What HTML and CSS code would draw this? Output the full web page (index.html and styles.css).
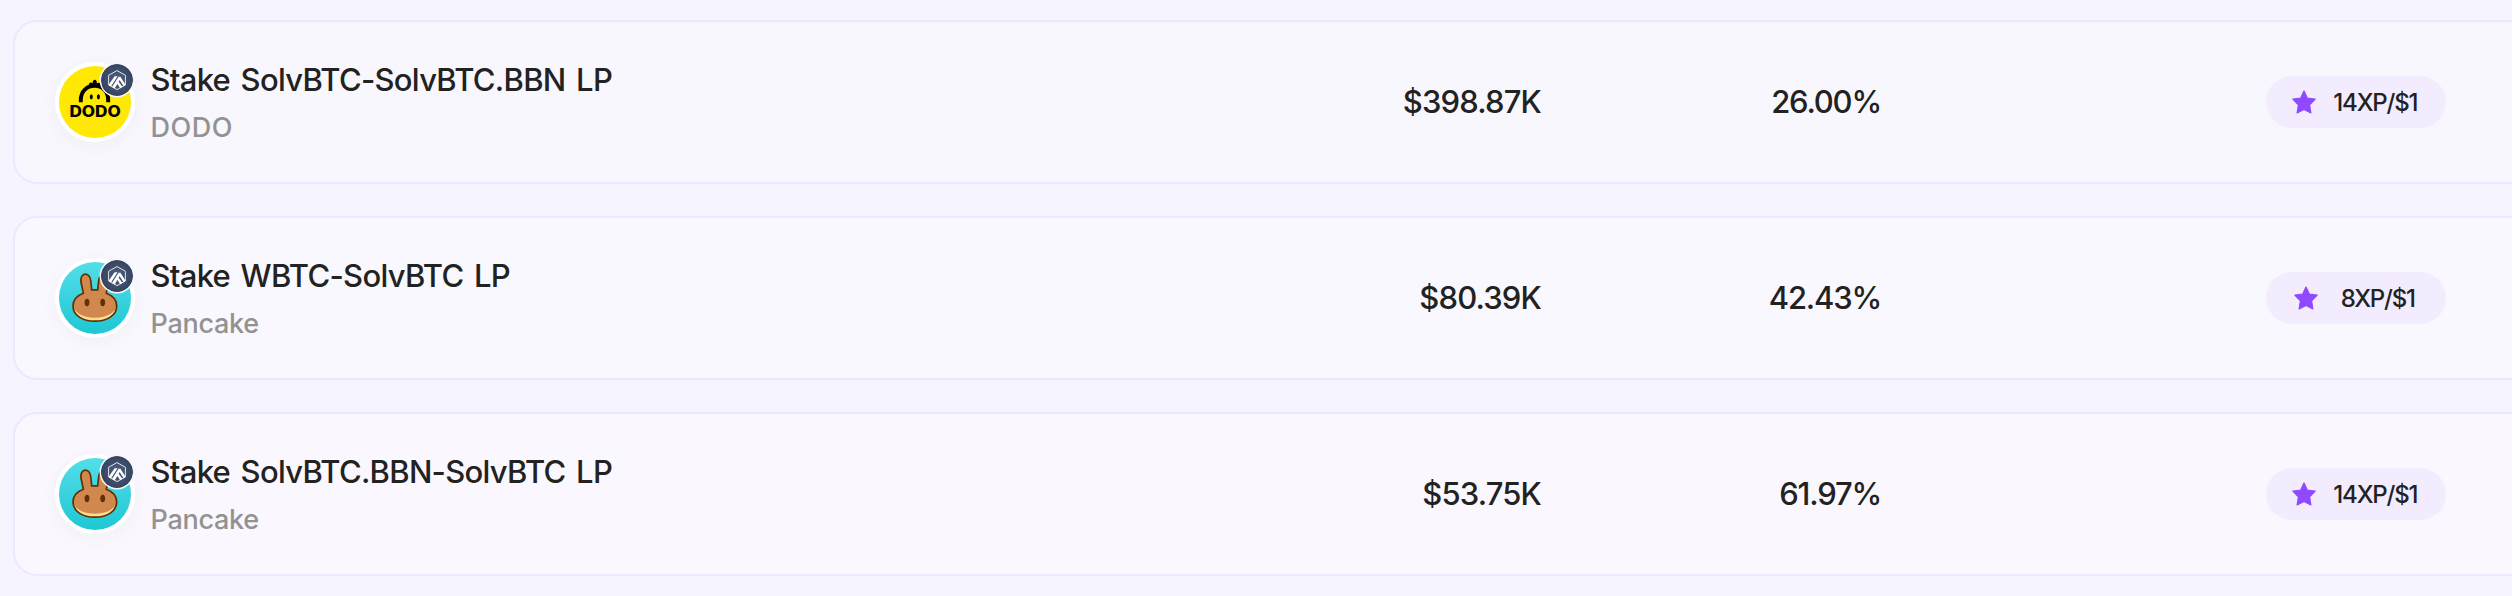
FILE: index.html
```html
<!DOCTYPE html>
<html lang="en">
<head>
    <meta charset="UTF-8">
    <meta name="viewport" content="width=device-width, initial-scale=1.0">
    <title>Stake</title>
    <link rel="stylesheet" href="styles.css">
</head>
<body>

<!-- shared icons -->
<svg class="defs" width="0" height="0">
    <defs>
        <radialGradient id="navy">
            <stop offset="0" stop-color="#50617f"/>
            <stop offset="1" stop-color="#35435f"/>
        </radialGradient>
        <linearGradient id="aqua" x1="0" y1="0" x2="0" y2="1">
            <stop offset="0" stop-color="#53dee9"/>
            <stop offset="1" stop-color="#1fc7d4"/>
        </linearGradient>
    </defs>
    <symbol id="arbitrum" viewBox="0 0 32 32">
        <circle cx="16" cy="16" r="16" fill="url(#navy)"/>
        <path d="M16 6.6 24.4 11.3V20.9L16 25.6 7.6 20.9V11.3Z" fill="none" stroke="#dfe5ee" stroke-width="1"/>
        <path d="M8 20.2 13.6 12.2H16.5L10 22.4 8 21.3ZM11 23 18 12.2 19.5 14.6 13.7 24.5ZM19.2 12.6 24.2 20.2V21.3L22.6 22.3 17.9 14.8ZM17.2 17.2 21.5 23 19.2 24.3 16 19.2Z" fill="#fff"/>
    </symbol>
    <symbol id="pancake" viewBox="0 0 72 72">
        <rect width="72" height="72" fill="url(#aqua)"/>
        <path d="M24.3 31.2 22 20C20.8 9.5 31 10 31.7 18.5L32.7 27.9H38.7L39.7 18.5C40.5 10 50.5 9.5 49.5 20L47.3 31.2C54 33.7 57.7 38 57.7 44 57.7 53.5 48 59.2 35.8 59.2S14 53.5 14 44C14 38 17.7 33.7 24.3 31.2Z" fill="#fedc90"/>
        <path d="M24.3 31.2 22 20C20.8 9.5 31 10 31.7 18.5L32.7 27.9H38.7L39.7 18.5C40.5 10 50.5 9.5 49.5 20L47.3 31.2C54 33.7 57.7 37 57.7 42 57.7 50.5 48 55.7 35.8 55.7S14 50.5 14 42C14 37 17.7 33.7 24.3 31.2Z" fill="#d1884f"/>
        <path d="M24.3 31.2 22 20C20.8 9.5 31 10 31.7 18.5L32.7 27.9H38.7L39.7 18.5C40.5 10 50.5 9.5 49.5 20L47.3 31.2C54 33.7 57.7 38 57.7 44 57.7 53.5 48 59.2 35.8 59.2S14 53.5 14 44C14 38 17.7 33.7 24.3 31.2Z" fill="none" stroke="#633001" stroke-width="1.7"/>
        <ellipse cx="28" cy="40.5" rx="2.4" ry="3.7" fill="#633001"/>
        <ellipse cx="43.7" cy="40.5" rx="2.4" ry="3.7" fill="#633001"/>
    </symbol>
    <symbol id="star" viewBox="0 0 24 24">
        <path d="M12 1 15.3 8 23.2 9.2 17.6 14.9 18.9 23 12 19.5 5.1 23 6.4 14.9.8 9.2 8.7 8Z" fill="#8f4aff" stroke="#8f4aff" stroke-width="1.2" stroke-linejoin="round"/>
    </symbol>
</svg>

<div class="list">
    <div class="row">
        <div class="pool">
            <div class="avatar">
                <svg class="logo" viewBox="0 0 72 72">
                    <rect width="72" height="72" fill="#ffe804"/>
                    <path d="M21.8 36.2V34C21.8 25 28 19.8 35.6 19.8S49.2 25 49.2 34V36.2" fill="none" stroke="#000" stroke-width="3.9"/>
                    <path d="M31 20.5C29.5 19 29.8 16.8 31.6 16.6 32.4 16.5 33.2 17 33.6 17.4 33.5 15 34.6 13.8 35.8 13.8S38 15 37.9 17.4C39 16.3 41.4 16.4 41.6 18 41.7 19 41 20 40 20.8Z"/>
                    <ellipse cx="32.3" cy="30.8" rx="1.5" ry="2.6"/>
                    <ellipse cx="39.4" cy="30.8" rx="1.5" ry="2.6"/>
                    <text class="dodo-text" x="10.4" y="51" textLength="51.4" lengthAdjust="spacingAndGlyphs">DODO</text>
                </svg>
                <svg class="chain"><use href="#arbitrum"/></svg>
            </div>
            <div class="names">
                <div class="title">Stake SolvBTC-SolvBTC.BBN LP</div>
                <div class="platform platform-caps">DODO</div>
            </div>
        </div>
        <div class="value">$398.87K</div>
        <div class="value apy">26.00%</div>
        <div class="reward">
            <div class="pill">
                <svg class="star"><use href="#star"/></svg>
                <span>14XP/$1</span>
            </div>
        </div>
    </div>

    <div class="row">
        <div class="pool">
            <div class="avatar">
                <svg class="logo"><use href="#pancake"/></svg>
                <svg class="chain"><use href="#arbitrum"/></svg>
            </div>
            <div class="names">
                <div class="title">Stake WBTC-SolvBTC LP</div>
                <div class="platform">Pancake</div>
            </div>
        </div>
        <div class="value">$80.39K</div>
        <div class="value apy">42.43%</div>
        <div class="reward">
            <div class="pill">
                <svg class="star"><use href="#star"/></svg>
                <span>8XP/$1</span>
            </div>
        </div>
    </div>

    <div class="row">
        <div class="pool">
            <div class="avatar">
                <svg class="logo"><use href="#pancake"/></svg>
                <svg class="chain"><use href="#arbitrum"/></svg>
            </div>
            <div class="names">
                <div class="title">Stake SolvBTC.BBN-SolvBTC LP</div>
                <div class="platform">Pancake</div>
            </div>
        </div>
        <div class="value">$53.75K</div>
        <div class="value apy">61.97%</div>
        <div class="reward">
            <div class="pill">
                <svg class="star"><use href="#star"/></svg>
                <span>14XP/$1</span>
            </div>
        </div>
    </div>
</div>

</body>
</html>
```
FILE: styles.css
```css
* {
    box-sizing: border-box;
}
body {
    margin: 0;
    height: 596px;
    overflow: hidden;
    background: #f6f4fe;
    color: #222;
    font-family: Inter, 'Liberation Sans', sans-serif;
    font-weight: 500;
}
.defs {
    position: absolute;
}
.list {
    display: flex;
    flex-direction: column;
    gap: 32px;
    width: 2600px;
    padding: 20px 0 0 13px;
}
.row {
    display: grid;
    grid-template-columns: 1186px 300px 340px 565px;
    align-items: center;
    height: 164px;
    padding-left: 40px;
    border: 2px solid #f0e7ff;
    border-radius: 24px;
    background: #f8f7fe;
}
.row:nth-child(2) {
    background: #f9f8fe;
}
.row:nth-child(3) {
    background: #faf8fe;
}
.pool {
    display: flex;
    align-items: center;
    gap: 15.5px;
}
.avatar {
    position: relative;
    width: 80px;
    height: 80px;
    border: 4px solid #fff;
    border-radius: 50%;
    box-shadow: 0 4px 20px rgba(40, 30, 80, 0.04);
}
.logo {
    display: block;
    width: 72px;
    height: 72px;
    border-radius: 50%;
}
.chain {
    position: absolute;
    top: -2px;
    right: -2px;
    width: 32px;
    height: 32px;
    border-radius: 50%;
    box-shadow: 0 0 0 1.5px #f6f6fa;
}
.dodo-text {
    font-size: 15.5px;
    font-weight: 800;
}
.names {
    padding-top: 4px;
}
.title {
    font-size: 31px;
    line-height: 48px;
    letter-spacing: -0.72px;
    word-spacing: 3px;
    white-space: nowrap;
}
.platform {
    font-size: 27px;
    line-height: 48px;
    letter-spacing: -0.3px;
    color: #929292;
}
.platform-caps {
    letter-spacing: 0.5px;
}
.value {
    font-size: 31px;
    line-height: 40px;
    letter-spacing: -0.85px;
    text-align: right;
}
.apy {
    letter-spacing: -1.2px;
}
.reward {
    display: flex;
    justify-content: flex-end;
}
.pill {
    display: flex;
    align-items: center;
    justify-content: space-around;
    width: 180px;
    height: 52px;
    padding: 0 20px 0 17px;
    border-radius: 26px;
    background: #f3ecff;
    font-size: 24px;
    letter-spacing: -1.2px;
}
.star {
    width: 24px;
    height: 24px;
}
```
